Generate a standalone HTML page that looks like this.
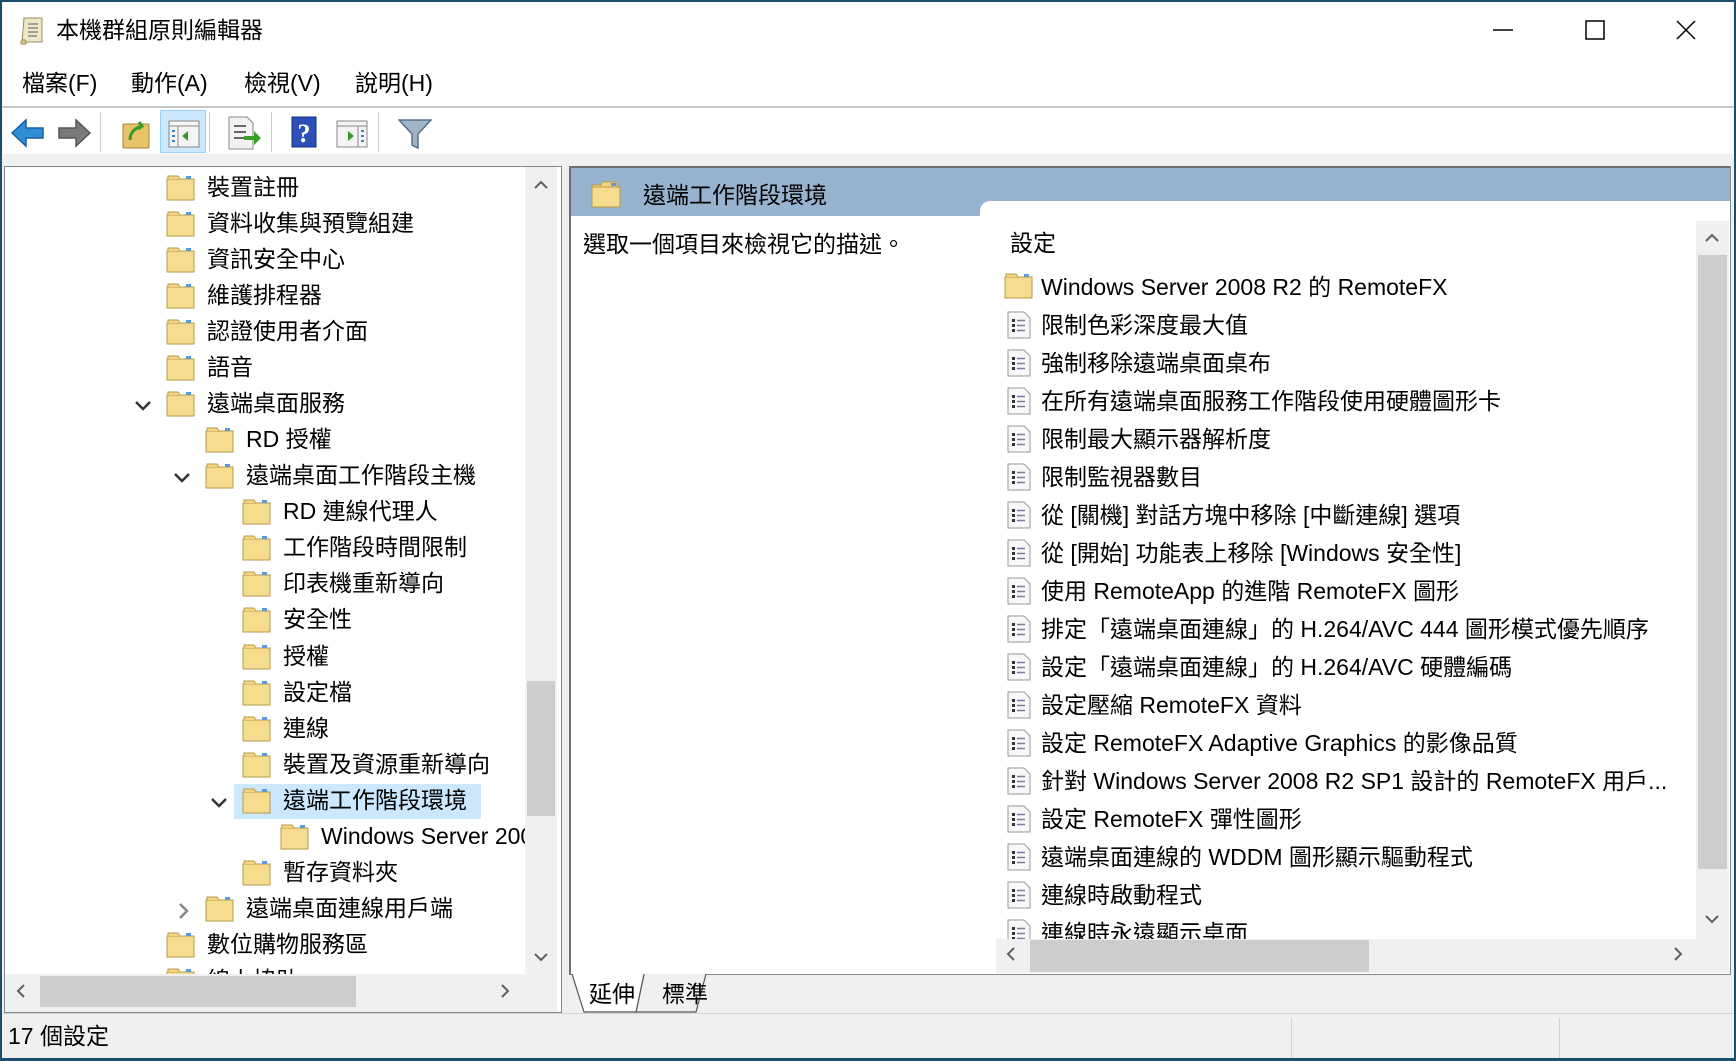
<!DOCTYPE html>
<html><head><meta charset="utf-8">
<style>
*{margin:0;padding:0;box-sizing:border-box}
body{width:1736px;height:1061px;overflow:hidden;background:#f0f0f0;font-family:"Liberation Sans","Noto Sans CJK TC",sans-serif;font-size:23px;color:#000;position:relative}
.a{position:absolute;white-space:nowrap}
.t{line-height:30px;height:30px}
svg{display:block}
</style></head><body>
<div class="a" style="left:0;top:0;width:1736px;height:1061px;border:2px solid #1c4e6e;border-bottom-width:3px;z-index:50;pointer-events:none"></div>
<div class="a" style="left:0;top:0;width:1736px;height:107px;background:#fff"></div>
<svg class="a" style="left:18px;top:15px" width="28" height="32" viewBox="0 0 28 32"><path d="M6 3h18v24H4z" fill="#efe6c4" stroke="#9b8c60"/><path d="M3 27c0-3 5-3 5 0v2H3z" fill="#d9c98f" stroke="#9b8c60"/><g stroke="#888" stroke-width="1.5"><path d="M10 9h10M10 13h10M10 17h10M10 21h9"/></g></svg>
<div class="a t" style="left:56px;top:15px">本機群組原則編輯器</div>
<svg class="a" style="left:1492px;top:20px" width="22" height="20"><path d="M1 10h20" stroke="#000" stroke-width="1.5"/></svg>
<svg class="a" style="left:1585px;top:20px" width="20" height="20"><rect x="1" y="1" width="18" height="18" fill="none" stroke="#000" stroke-width="1.5"/></svg>
<svg class="a" style="left:1676px;top:20px" width="20" height="20"><path d="M1 1l18 18M19 1L1 19" stroke="#000" stroke-width="1.5"/></svg>
<div class="a t" style="left:22px;top:68px">檔案(F)</div>
<div class="a t" style="left:131px;top:68px">動作(A)</div>
<div class="a t" style="left:244px;top:68px">檢視(V)</div>
<div class="a t" style="left:355px;top:68px">說明(H)</div>
<div class="a" style="left:0;top:106px;width:1736px;height:2px;background:#c8c8c8"></div>
<div class="a" style="left:0;top:108px;width:1736px;height:46px;background:#fff"></div>
<svg class="a" style="left:10px;top:116px" width="36" height="34" viewBox="0 0 36 34"><path d="M2 17L16 4v8h17v10H16v8z" fill="#2e8fd6" stroke="#1b5fa0" stroke-width="1.5"/></svg>
<svg class="a" style="left:56px;top:116px" width="36" height="34" viewBox="0 0 36 34"><path d="M34 17L20 4v8H3v10h17v8z" fill="#7a7a7a" stroke="#555" stroke-width="1.5"/></svg>
<div class="a" style="left:100px;top:112px;width:1px;height:40px;background:#ccc"></div>
<svg class="a" style="left:122px;top:116px" width="28" height="34" viewBox="0 0 28 34"><rect x="1" y="8" width="26" height="24" fill="#e8c36a" stroke="#a8873a"/><path d="M8 24c0-8 5-12 12-14l-3-4M20 10l-4 3" stroke="#3a9a2a" stroke-width="3" fill="none"/></svg>
<div class="a" style="left:160px;top:110px;width:46px;height:43px;background:#cce8ff;border:1px solid #99d1ff"></div>
<svg class="a" style="left:168px;top:120px" width="32" height="28" viewBox="0 0 32 28"><rect x="1" y="1" width="30" height="26" fill="#f4f4f4" stroke="#888"/><path d="M1 6h30" stroke="#888"/><path d="M10 6v21" stroke="#888"/><path d="M20 11l-6 5 6 5z" fill="#3a9a2a"/><path d="M4 11h3M4 16h3M4 21h3" stroke="#4a7fc0" stroke-width="2"/></svg>
<div class="a" style="left:209px;top:112px;width:1px;height:40px;background:#ccc"></div>
<svg class="a" style="left:226px;top:116px" width="36" height="34" viewBox="0 0 36 34"><path d="M3 1h18l6 6v26H3z" fill="#f2f2f2" stroke="#888"/><path d="M8 10h12M8 16h12M8 22h12" stroke="#666" stroke-width="2"/><path d="M18 20h10v-5l7 7-7 7v-5H18z" fill="#3aa02a"/></svg>
<div class="a" style="left:271px;top:112px;width:1px;height:40px;background:#ccc"></div>
<svg class="a" style="left:291px;top:116px" width="26" height="32" viewBox="0 0 26 32"><rect x="1" y="1" width="24" height="30" fill="#2d4fb8" stroke="#1a2f7a"/><text x="13" y="26" font-size="26" font-family="Liberation Serif" fill="#fff" text-anchor="middle" font-weight="bold">?</text></svg>
<svg class="a" style="left:336px;top:120px" width="32" height="28" viewBox="0 0 32 28"><rect x="1" y="1" width="30" height="26" fill="#f4f4f4" stroke="#888"/><path d="M1 6h30" stroke="#888"/><path d="M22 6v21" stroke="#888"/><path d="M12 11l6 5-6 5z" fill="#3a9a2a"/><path d="M25 11h3M25 16h3M25 21h3" stroke="#4a7fc0" stroke-width="2"/></svg>
<div class="a" style="left:378px;top:112px;width:1px;height:40px;background:#ccc"></div>
<svg class="a" style="left:398px;top:118px" width="34" height="32" viewBox="0 0 34 32"><path d="M1 2h32L20 16v14l-6-3V16z" fill="#9fb4c8" stroke="#5a6f84" stroke-width="1.5"/></svg>
<div class="a" style="left:4px;top:166px;width:558px;height:847px;background:#fff;border:1px solid #828790"></div>
<div class="a" style="left:5px;top:167px;width:520px;height:807px;overflow:hidden"><div id="tree"></div></div>
<div class="a" style="left:525px;top:167px;width:32px;height:807px;background:#f0f0f0"></div>
<div class="a" style="left:527px;top:681px;width:28px;height:135px;background:#cdcdcd"></div>
<svg class="a" style="left:534px;top:180px" width="14" height="10"><path d="M1 8l6-6 6 6" stroke="#606060" stroke-width="2" fill="none"/></svg>
<svg class="a" style="left:534px;top:952px" width="14" height="10"><path d="M1 2l6 6 6-6" stroke="#606060" stroke-width="2" fill="none"/></svg>
<div class="a" style="left:5px;top:974px;width:552px;height:38px;background:#f0f0f0"></div>
<div class="a" style="left:40px;top:976px;width:316px;height:31px;background:#cdcdcd"></div>
<svg class="a" style="left:16px;top:984px" width="10" height="14"><path d="M8 1L2 7l6 6" stroke="#606060" stroke-width="2" fill="none"/></svg>
<svg class="a" style="left:500px;top:984px" width="10" height="14"><path d="M2 1l6 6-6 6" stroke="#606060" stroke-width="2" fill="none"/></svg>
<div class="a" style="left:569px;top:166px;width:1162px;height:809px;background:#fff;border:1px solid #828790;border-top:2px solid #6f6f6f;border-left:2px solid #6f6f6f"></div>
<div class="a" style="left:571px;top:168px;width:1159px;height:48px;background:#98b3d0"></div>
<div class="a" style="left:980px;top:201px;width:750px;height:20px;background:#fff;border-top-left-radius:10px"></div>
<svg class="a" style="left:591px;top:181px" width="30" height="27" viewBox="0 0 30 27"><path d="M1 4h9l2-3h14v25H1z" fill="#f3d582" stroke="#b89a4a"/><rect x="1" y="6" width="28" height="20" fill="#f6dc8e" stroke="#b89a4a"/><rect x="20" y="2" width="5" height="3" fill="#5a9ad8"/></svg>
<div class="a t" style="left:643px;top:180px">遠端工作階段環境</div>
<div class="a t" style="left:583px;top:229px">選取一個項目來檢視它的描述。</div>
<div class="a t" style="left:1010px;top:228px">設定</div>
<div class="a" style="left:996px;top:255px;width:700px;height:684px;overflow:hidden" id="rl"></div>
<div class="a" style="left:1696px;top:221px;width:33px;height:718px;background:#f0f0f0"></div>
<div class="a" style="left:1698px;top:255px;width:29px;height:614px;background:#cdcdcd"></div>
<svg class="a" style="left:1705px;top:233px" width="14" height="10"><path d="M1 8l6-6 6 6" stroke="#606060" stroke-width="2" fill="none"/></svg>
<svg class="a" style="left:1705px;top:914px" width="14" height="10"><path d="M1 2l6 6 6-6" stroke="#606060" stroke-width="2" fill="none"/></svg>
<div class="a" style="left:996px;top:939px;width:733px;height:34px;background:#f0f0f0"></div>
<div class="a" style="left:1030px;top:940px;width:339px;height:32px;background:#cdcdcd"></div>
<svg class="a" style="left:1006px;top:947px" width="10" height="14"><path d="M8 1L2 7l6 6" stroke="#606060" stroke-width="2" fill="none"/></svg>
<svg class="a" style="left:1673px;top:947px" width="10" height="14"><path d="M2 1l6 6-6 6" stroke="#606060" stroke-width="2" fill="none"/></svg>
<svg class="a" style="left:570px;top:974px" width="160" height="40"><path d="M74 0l-8 38h60l10-38" fill="#f0f0f0" stroke="#555" stroke-width="1.2"/><path d="M2 0l12 38h52l8-38" fill="#fff" stroke="#555" stroke-width="1.2"/></svg>
<div class="a t" style="left:589px;top:979px">延伸</div>
<div class="a t" style="left:662px;top:979px">標準</div>
<div class="a" style="left:0;top:1013px;width:1736px;height:1px;background:#d4d4d4"></div>
<div class="a" style="left:1291px;top:1018px;width:1px;height:40px;background:#d4d4d4"></div>
<div class="a" style="left:1559px;top:1018px;width:1px;height:40px;background:#d4d4d4"></div>
<div class="a t" style="left:8px;top:1021px">17 個設定</div>
<script>
var F='<svg width="30" height="27" viewBox="0 0 30 27"><rect x="1" y="5" width="27" height="21" fill="#f6dc8e" stroke="#b89a4a"/><path d="M2 5V2h10l2 3" fill="#f3d582" stroke="#b89a4a"/><rect x="20" y="2" width="5" height="3" fill="#5a9ad8"/></svg>';
var P='<svg width="26" height="28" viewBox="0 0 26 28"><path d="M2 1h16l6 6v20H2z" fill="#f8f8f8" stroke="#999"/><g fill="#333"><rect x="6" y="8" width="3" height="3"/><rect x="6" y="13" width="3" height="3"/><rect x="6" y="18" width="3" height="3"/></g><g stroke="#7a7aa0" stroke-width="1.5"><path d="M11 9.5h8M11 14.5h8M11 19.5h8"/></g></svg>';
var tree=[[1,'裝置註冊'],[1,'資料收集與預覽組建'],[1,'資訊安全中心'],[1,'維護排程器'],[1,'認證使用者介面'],[1,'語音'],[1,'遠端桌面服務','v'],[2,'RD 授權'],[2,'遠端桌面工作階段主機','v'],[3,'RD 連線代理人'],[3,'工作階段時間限制'],[3,'印表機重新導向'],[3,'安全性'],[3,'授權'],[3,'設定檔'],[3,'連線'],[3,'裝置及資源重新導向'],[3,'遠端工作階段環境','v',1],[4,'Windows Server 2008 R2 的 RemoteFX'],[3,'暫存資料夾'],[2,'遠端桌面連線用戶端','>'],[1,'數位購物服務區'],[1,'線上協助']];
var fx=[0,161,200,237,275],h='';
tree.forEach(function(r,i){var y=186+36.04*i-165;var x=fx[r[0]];
if(r[3])h+='<div class="a" style="left:'+(x-8)+'px;top:'+(y-17)+'px;width:247px;height:35px;background:#cce8ff"></div>';
if(r[2]=='v')h+='<svg class="a" style="left:'+(x-32)+'px;top:'+(y-4)+'px" width="18" height="12"><path d="M2 2l7 7 7-7" stroke="#333" stroke-width="2.5" fill="none"/></svg>';
if(r[2]=='>')h+='<svg class="a" style="left:'+(x-27)+'px;top:'+(y-7)+'px" width="12" height="18"><path d="M2 2l7 7-7 7" stroke="#888" stroke-width="2.5" fill="none"/></svg>';
h+='<div class="a" style="left:'+x+'px;top:'+(y-14)+'px">'+F+'</div><div class="a t" style="left:'+(x+41)+'px;top:'+(y-16)+'px">'+r[1]+'</div>';});
document.getElementById('tree').innerHTML=h;
var items=['限制色彩深度最大值','強制移除遠端桌面桌布','在所有遠端桌面服務工作階段使用硬體圖形卡','限制最大顯示器解析度','限制監視器數目','從 [關機] 對話方塊中移除 [中斷連線] 選項','從 [開始] 功能表上移除 [Windows 安全性]','使用 RemoteApp 的進階 RemoteFX 圖形','排定「遠端桌面連線」的 H.264/AVC 444 圖形模式優先順序','設定「遠端桌面連線」的 H.264/AVC 硬體編碼','設定壓縮 RemoteFX 資料','設定 RemoteFX Adaptive Graphics 的影像品質','針對 Windows Server 2008 R2 SP1 設計的 RemoteFX 用戶...','設定 RemoteFX 彈性圖形','遠端桌面連線的 WDDM 圖形顯示驅動程式','連線時啟動程式','連線時永遠顯示桌面'];
var g='<div class="a" style="left:8px;top:17px">'+F+'</div><div class="a t" style="left:45px;top:17px">Windows Server 2008 R2 的 RemoteFX</div>';
items.forEach(function(s,i){var y=32+38*(i+1)-15;g+='<div class="a" style="left:10px;top:'+(y+1)+'px">'+P+'</div><div class="a t" style="left:45px;top:'+y+'px">'+s+'</div>';});
document.getElementById('rl').innerHTML=g;
</script>
</body></html>
